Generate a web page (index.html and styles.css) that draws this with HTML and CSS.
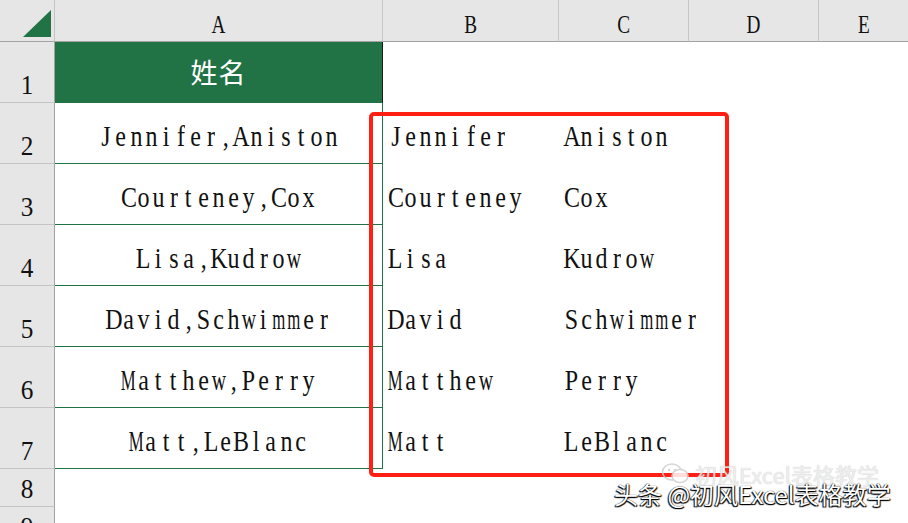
FILE: index.html
```html
<!DOCTYPE html>
<html lang="zh">
<head>
<meta charset="utf-8">
<title>Sheet</title>
<link rel="stylesheet" href="styles.css">
</head>
<body>
<div class="sheet">
  <div class="corner"><svg width="54" height="41" viewBox="0 0 54 41"><polygon points="51,10 51,37 23,37" fill="#217346"/></svg></div>
  <div class="ch"><span class="lt">A</span></div>
  <div class="ch"><span class="lt">B</span></div>
  <div class="ch"><span class="lt">C</span></div>
  <div class="ch"><span class="lt">D</span></div>
  <div class="ch last"><span class="lt">E</span></div>

  <div class="rh"><span class="num">1</span></div>
  <div class="a1">姓名</div>
  <div class="c"></div><div class="c"></div><div class="c"></div><div class="c"></div>

  <div class="rh"><span class="num">2</span></div>
  <div class="a"><span class="m">Jennifer,Aniston</span></div>
  <div class="c l"><span class="m">Jennifer</span></div>
  <div class="c l"><span class="m">Aniston</span></div>
  <div class="c"></div><div class="c"></div>

  <div class="rh"><span class="num">3</span></div>
  <div class="a"><span class="m">Courteney,Cox</span></div>
  <div class="c l"><span class="m">Courteney</span></div>
  <div class="c l"><span class="m">Cox</span></div>
  <div class="c"></div><div class="c"></div>

  <div class="rh"><span class="num">4</span></div>
  <div class="a"><span class="m">Lisa,Kudrow</span></div>
  <div class="c l"><span class="m">Lisa</span></div>
  <div class="c l"><span class="m">Kudrow</span></div>
  <div class="c"></div><div class="c"></div>

  <div class="rh"><span class="num">5</span></div>
  <div class="a"><span class="m">David,Schwimmer</span></div>
  <div class="c l"><span class="m">David</span></div>
  <div class="c l"><span class="m">Schwimmer</span></div>
  <div class="c"></div><div class="c"></div>

  <div class="rh"><span class="num">6</span></div>
  <div class="a"><span class="m">Matthew,Perry</span></div>
  <div class="c l"><span class="m">Matthew</span></div>
  <div class="c l"><span class="m">Perry</span></div>
  <div class="c"></div><div class="c"></div>

  <div class="rh"><span class="num">7</span></div>
  <div class="a"><span class="m">Matt,LeBlanc</span></div>
  <div class="c l"><span class="m">Matt</span></div>
  <div class="c l"><span class="m">LeBlanc</span></div>
  <div class="c"></div><div class="c"></div>

  <div class="rh"><span class="num">8</span></div>
  <div class="c"></div><div class="c"></div><div class="c"></div><div class="c"></div><div class="c"></div>

  <div class="rh"><span class="num">9</span></div>
  <div class="c"></div><div class="c"></div><div class="c"></div><div class="c"></div><div class="c"></div>
</div>

<div class="redbox"></div>

<div class="ghost">
  <svg class="wx" width="30" height="24" viewBox="0 0 30 24"><ellipse cx="11" cy="10" rx="9.5" ry="8" fill="none" stroke="#cfcfcf" stroke-width="1.6"/><ellipse cx="19" cy="14" rx="8" ry="6.5" fill="#fff" stroke="#cfcfcf" stroke-width="1.6"/><circle cx="8" cy="8" r="1.2" fill="#cfcfcf"/><circle cx="14" cy="8" r="1.2" fill="#cfcfcf"/></svg>
  <span>初风Excel表格教学</span>
</div>
<div class="wm">头条 @初风Excel表格教学</div>
<script src="script.js"></script>
</body>
</html>
```

FILE: script.js
```js
document.querySelectorAll('.m').forEach(function (el) {
  var t = el.textContent;
  el.textContent = '';
  Array.from(t).forEach(function (ch) {
    var s = document.createElement('span');
    s.className = 'g';
    var inner = document.createElement('span');
    inner.className = 'gl';
    if ('mM'.indexOf(ch) >= 0) inner.className += ' wide';
    else if ('wW'.indexOf(ch) >= 0) inner.className += ' mid';
    inner.textContent = ch;
    s.appendChild(inner);
    el.appendChild(s);
  });
});
```

FILE: styles.css
```css
html, body {
  margin: 0;
  padding: 0;
  background: #ffffff;
}
body {
  width: 908px;
  height: 523px;
  overflow: hidden;
  position: relative;
}
.sheet {
  display: grid;
  grid-template-columns: 55px 328px 176px 130px 130px 1fr;
  grid-template-rows: 42px repeat(7, 61px) 38px 38px;
  height: 523px;
  overflow: hidden;
}
.sheet > div {
  box-sizing: border-box;
  min-width: 0;
}
.corner {
  background: #e6e6e6;
  border-right: 1px solid #c4c4c4;
  border-bottom: 1px solid #a3a3a3;
}
.corner svg { display: block; }
.ch {
  background: #e6e6e6;
  border-right: 1px solid #c6c6c6;
  border-bottom: 1px solid #a3a3a3;
  display: flex;
  align-items: flex-end;
  justify-content: center;
  padding-bottom: 3px;
}
.ch.last { border-right: none; }
.lt {
  display: inline-block;
  font-family: "Liberation Serif", serif;
  font-size: 26px;
  line-height: 1;
  color: #111;
  transform: scaleX(0.74);
}
.rh {
  background: #e6e6e6;
  border-right: 1px solid #a3a3a3;
  border-bottom: 1px solid #c4c4c4;
  display: flex;
  align-items: flex-end;
  justify-content: center;
  padding-bottom: 3px;
}
.num {
  display: inline-block;
  font-family: "Liberation Serif", serif;
  font-size: 28px;
  line-height: 1;
  color: #111;
  transform: scaleX(0.9);
}
.a1 {
  background: #217346;
  border-right: 1px solid #1b1b1b;
  border-bottom: 1px solid #217346;
  color: #ffffff;
  font-family: "Noto Sans CJK SC", sans-serif;
  font-size: 27px;
  letter-spacing: 1px;
  display: flex;
  align-items: center;
  justify-content: center;
  padding-bottom: 2px;
}
.a {
  border-right: 1px solid #217346;
  border-bottom: 1px solid #217346;
  display: flex;
  align-items: center;
  justify-content: center;
  padding-top: 5px;
}
.c {
  display: flex;
  align-items: center;
  padding-top: 5px;
}
.c.l { padding-left: 5px; }
.m {
  display: inline-flex;
  flex: none;
  font-family: "Liberation Serif", serif;
  font-size: 30px;
  line-height: 1;
  color: #111;
  white-space: nowrap;
}
.g {
  display: inline-flex;
  width: 15px;
  justify-content: center;
}
.gl {
  display: inline-block;
  flex: none;
  transform: scaleX(0.8);
}
.gl.wide { transform: scaleX(0.56); }
.gl.mid { transform: scaleX(0.66); }
.redbox {
  position: absolute;
  left: 369px;
  top: 112px;
  width: 360px;
  height: 365px;
  box-sizing: border-box;
  border: 4px solid #ff1f13;
  border-radius: 5px;
}
.ghost {
  position: absolute;
  left: 661px;
  top: 462px;
  display: flex;
  align-items: center;
  gap: 4px;
  opacity: 0.85;
}
.ghost span {
  font-family: "Noto Sans CJK SC", sans-serif;
  font-size: 22px;
  line-height: 1;
  color: #ececec;
  text-shadow: 0 0 1px #b5b5b5;
}
.wm {
  position: absolute;
  left: 614px;
  top: 480px;
  font-family: "Noto Sans CJK SC", sans-serif;
  font-size: 24px;
  line-height: 1.2;
  color: #ffffff;
  white-space: nowrap;
  text-shadow: -1px 1px 1px #000, 1px 1px 1px #000, 0 0 1px #000;
}
```
